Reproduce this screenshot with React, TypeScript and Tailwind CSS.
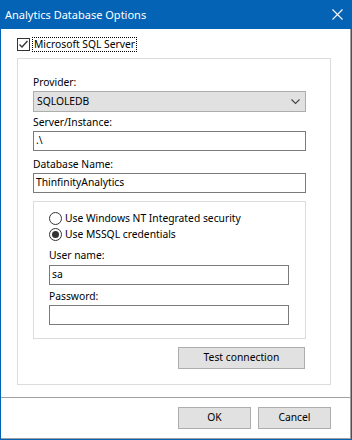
import React from "react";

const font = { fontFamily: '"Noto Sans", "Open Sans", sans-serif' };

function Label({ children, className = "" }: { children: React.ReactNode; className?: string }) {
  return <div className={"h-[15px] leading-[15px] text-[10.3px] text-black " + className}>{children}</div>;
}

function TextBox({ value, className = "" }: { value: string; className?: string }) {
  return (
    <div className={"h-[20px] border border-[#7a7a7a] bg-white flex items-center px-[2px] text-[10.3px] text-black " + className}>
      {value}
    </div>
  );
}

function Radio({ checked, label }: { checked: boolean; label: string }) {
  return (
    <div className="h-[16px] flex items-center">
      <div className="w-[13px] h-[13px] rounded-full border border-[#333333] bg-white flex items-center justify-center">
        {checked && <div className="w-[7px] h-[7px] rounded-full bg-[#333333]" />}
      </div>
      <span className="ml-[3px] text-[10.3px] leading-[15px] text-black">{label}</span>
    </div>
  );
}

function Button({ children, className = "" }: { children: React.ReactNode; className?: string }) {
  return (
    <div className={"h-[22px] border border-[#adadad] bg-[#e1e1e1] flex items-center justify-center text-[10.3px] text-black " + className}>
      {children}
    </div>
  );
}

export default function App() {
  return (
    <div style={font} className="w-[352px] h-[440px] border border-t-0 border-[#0563b5] bg-white flex flex-col overflow-hidden">
      <div className="h-[29px] bg-[#0563b5] flex items-center justify-between pl-[4px] pr-[8px] shrink-0">
        <span className="text-[11px] text-white leading-[15px] -mt-[1px]">Analytics Database Options</span>
        <svg width="11" height="11" viewBox="0 0 11 11" className="-mt-[1px]">
          <path d="M0.5 0.5 L10.5 10.5 M10.5 0.5 L0.5 10.5" stroke="white" strokeWidth="1.1" />
        </svg>
      </div>
      <div className="flex-1 flex flex-col border-r border-b border-[#a0a0a0]">
        <div className="flex-1 pl-[16px] pr-[19px]">
          <div className="mt-[8px] h-[15px] flex items-center">
            <div className="w-[13px] h-[13px] border border-[#333333] bg-white flex items-center justify-center">
              <svg width="11" height="11" viewBox="0 0 11 11">
                <path d="M1.5 5.5 L4 8 L9.5 2" stroke="#333333" strokeWidth="1.3" fill="none" />
              </svg>
            </div>
            <div className="ml-[2px] h-[15px] border border-dotted border-black flex items-center px-[1px] text-[10.3px] leading-[13px] text-black">
              Microsoft SQL Server
            </div>
          </div>
          <div className="mt-[6px] h-[327px] border border-[#dcdcdc] pt-[16px] pl-[15px] pr-[24px]">
            <Label>Provider:</Label>
            <div className="mt-[1px] h-[21px] border border-[#adadad] bg-[#e1e1e1] flex items-center justify-between pl-[3px] pr-[5px] text-[10.3px] text-black">
              <span>SQLOLEDB</span>
              <svg width="9" height="6" viewBox="0 0 9 6">
                <path d="M0.5 0.5 L4.5 4.5 L8.5 0.5" stroke="#444444" strokeWidth="1.1" fill="none" />
              </svg>
            </div>
            <Label className="mt-[3px]">Server/Instance:</Label>
            <TextBox value=".\" className="mt-[1px]" />
            <Label className="mt-[6px]">Database Name:</Label>
            <TextBox value="ThinfinityAnalytics" className="mt-[1px]" />
            <div className="mt-[8px] h-[138px] border border-[#dcdcdc] pt-[8px] px-[15px]">
              <Radio checked={false} label="Use Windows NT Integrated security" />
              <Radio checked={true} label="Use MSSQL credentials" />
              <Label className="mt-[6px]">User name:</Label>
              <TextBox value="sa" className="mt-[2px] w-[240px]" />
              <Label className="mt-[4px]">Password:</Label>
              <TextBox value="" className="mt-[1px] w-[240px]" />
            </div>
            <div className="mt-[8px] flex justify-end">
              <Button className="w-[127px] mr-[1px]">Test connection</Button>
            </div>
          </div>
        </div>
        <div className="h-[41px] border-t border-[#a0a0a0] flex justify-end items-start pt-[9px] pr-[19px] gap-[7px] shrink-0">
          <Button className="w-[73px]">OK</Button>
          <Button className="w-[73px]">Cancel</Button>
        </div>
      </div>
    </div>
  );
}
